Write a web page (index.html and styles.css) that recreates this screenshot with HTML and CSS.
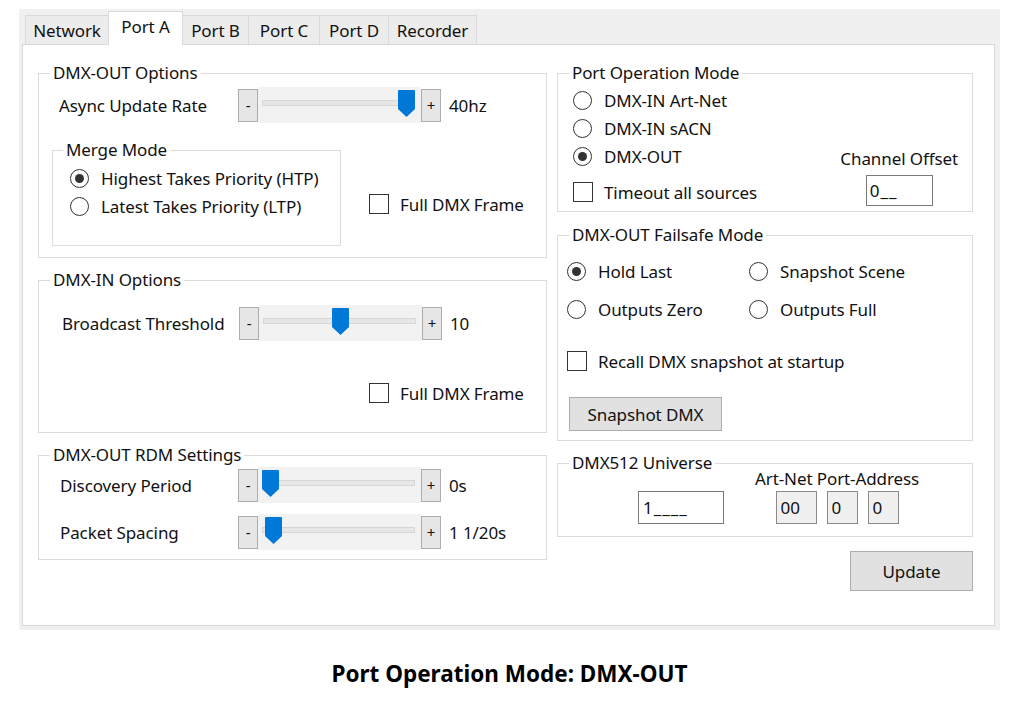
FILE: index.html
```html
<!DOCTYPE html>
<html lang="en">
<head>
<meta charset="utf-8">
<title>Port A</title>
<link rel="stylesheet" href="styles.css">
</head>
<body>
<div class="window">
  <div class="tabs">
    <div class="tab t-network">Network</div>
    <div class="tab active t-porta">Port A</div>
    <div class="tab t-portb">Port B</div>
    <div class="tab t-portc">Port C</div>
    <div class="tab t-portd">Port D</div>
    <div class="tab t-recorder">Recorder</div>
  </div>
  <div class="panel">
    <div class="col col-left">
      <section class="group g-out">
        <div class="legend">DMX-OUT Options</div>
        <div class="slider-row sr-out">
          <span class="lbl">Async Update Rate</span>
          <span class="spin">-</span>
          <span class="track"><span class="rail"></span><svg class="thumb" style="left:140px" width="17" height="27" viewBox="0 0 17 27"><path d="M1 0H16a1 1 0 0 1 1 1V19L8.5 27L0 19V1a1 1 0 0 1 1-1Z" fill="#0078d7"/></svg></span>
          <span class="spin">+</span>
          <span class="val">40hz</span>
        </div>
        <div class="out-row">
          <section class="group g-merge">
            <div class="legend">Merge Mode</div>
            <div class="radio-list merge-list">
              <div class="radio"><span class="dot on"></span>Highest Takes Priority (HTP)</div>
              <div class="radio"><span class="dot"></span>Latest Takes Priority (LTP)</div>
            </div>
          </section>
          <div class="check cb-out"><span class="box"></span>Full DMX Frame</div>
        </div>
      </section>

      <section class="group g-in">
        <div class="legend">DMX-IN Options</div>
        <div class="slider-row sr-in">
          <span class="lbl">Broadcast Threshold</span>
          <span class="spin">-</span>
          <span class="track"><span class="rail"></span><svg class="thumb" style="left:73px" width="17" height="27" viewBox="0 0 17 27"><path d="M1 0H16a1 1 0 0 1 1 1V19L8.5 27L0 19V1a1 1 0 0 1 1-1Z" fill="#0078d7"/></svg></span>
          <span class="spin">+</span>
          <span class="val">10</span>
        </div>
        <div class="check cb-in"><span class="box"></span>Full DMX Frame</div>
      </section>

      <section class="group g-rdm">
        <div class="legend">DMX-OUT RDM Settings</div>
        <div class="slider-row sr-rdm first">
          <span class="lbl">Discovery Period</span>
          <span class="spin">-</span>
          <span class="track"><span class="rail"></span><svg class="thumb" style="left:4px" width="17" height="27" viewBox="0 0 17 27"><path d="M1 0H16a1 1 0 0 1 1 1V19L8.5 27L0 19V1a1 1 0 0 1 1-1Z" fill="#0078d7"/></svg></span>
          <span class="spin">+</span>
          <span class="val">0s</span>
        </div>
        <div class="slider-row sr-rdm second">
          <span class="lbl">Packet Spacing</span>
          <span class="spin">-</span>
          <span class="track"><span class="rail"></span><svg class="thumb" style="left:7px" width="17" height="27" viewBox="0 0 17 27"><path d="M1 0H16a1 1 0 0 1 1 1V19L8.5 27L0 19V1a1 1 0 0 1 1-1Z" fill="#0078d7"/></svg></span>
          <span class="spin">+</span>
          <span class="val">1 1/20s</span>
        </div>
      </section>
    </div>

    <div class="col col-right">
      <section class="group g-port">
        <div class="legend">Port Operation Mode</div>
        <div class="port-body">
          <div class="radio-list">
            <div class="radio"><span class="dot"></span>DMX-IN Art-Net</div>
            <div class="radio"><span class="dot"></span>DMX-IN sACN</div>
            <div class="radio"><span class="dot on"></span>DMX-OUT</div>
            <div class="check cb-port"><span class="box"></span>Timeout all sources</div>
          </div>
          <div class="offset">
            <span class="cap">Channel Offset</span>
            <span class="input in-offset">0__</span>
          </div>
        </div>
      </section>

      <section class="group g-fail">
        <div class="legend">DMX-OUT Failsafe Mode</div>
        <div class="fail-grid">
          <div class="radio"><span class="dot on"></span>Hold Last</div>
          <div class="radio"><span class="dot"></span>Snapshot Scene</div>
          <div class="radio"><span class="dot"></span>Outputs Zero</div>
          <div class="radio"><span class="dot"></span>Outputs Full</div>
        </div>
        <div class="check cb-recall"><span class="box"></span>Recall DMX snapshot at startup</div>
        <div class="btn btn-snap">Snapshot DMX</div>
      </section>

      <section class="group g-uni">
        <div class="legend">DMX512 Universe</div>
        <div class="uni-body">
          <span class="input in-uni">1____</span>
          <div class="artnet">
            <span class="cap">Art-Net Port-Address</span>
            <div class="boxes">
              <span class="abox w2">00</span>
              <span class="abox w1">0</span>
              <span class="abox w1">0</span>
            </div>
          </div>
        </div>
      </section>

      <div class="btn btn-update">Update</div>
    </div>
  </div>
</div>
<p class="caption">Port Operation Mode: DMX-OUT</p>
</body>
</html>
```

FILE: styles.css
```css
* { box-sizing: border-box; }

body {
  margin: 0;
  background: #fff;
  font-family: "Noto Sans", "Open Sans", sans-serif;
  font-size: 17px;
  letter-spacing: -0.1px;
  color: #111;
}

.window {
  margin: 9px 0 0 19px;
  width: 981px;
  height: 621px;
  background: #f0f0f0;
  padding: 0 5px 4px 3px;
  display: flex;
  flex-direction: column;
}

/* tabs */
.tabs {
  height: 35px;
  flex: none;
  display: flex;
  align-items: flex-end;
  padding-left: 3px;
}
.tab {
  height: 29px;
  border: 1px solid #dadada;
  border-bottom: none;
  margin-left: -1px;
  background: #ececec;
  display: flex;
  justify-content: center;
  padding-top: 5px;
  line-height: 20px;
  white-space: nowrap;
}
.tab:first-child { margin-left: 0; }
.tab.active {
  height: 34px;
  margin-bottom: -1px;
  background: #fff;
  position: relative;
  z-index: 1;
}
.t-network { width: 84px; }
.t-porta { width: 75px; }
.t-portb { width: 67px; }
.t-portc { width: 72px; }
.t-portd { width: 70px; }
.t-recorder { width: 89px; }

/* panel */
.panel {
  flex: 1;
  background: #fff;
  border: 1px solid #d9d9d9;
  padding: 28px 0 0 15px;
  display: flex;
  gap: 10px;
  align-items: flex-start;
}
.col { display: flex; flex-direction: column; }
.col-left { width: 509px; }
.col-right { width: 416px; }

.group { border: 1px solid #dcdcdc; }
.legend {
  width: fit-content;
  height: 20px;
  margin: -11px 0 0 11px;
  padding: 0 3px;
  background: #fff;
  line-height: 20px;
  white-space: nowrap;
}

.g-out { height: 185px; }
.g-in { height: 153px; margin-top: 22px; }
.g-rdm { height: 105px; margin-top: 22px; }
.g-port { height: 139px; }
.g-fail { height: 206px; margin-top: 23px; }
.g-uni { height: 74px; margin-top: 22px; }

/* sliders */
.slider-row {
  display: flex;
  align-items: center;
  height: 36px;
}
.lbl { flex: none; white-space: nowrap; }
.sr-out { margin-top: 4px; padding-left: 20px; }
.sr-out .lbl { width: 179px; }
.sr-in { margin-top: 15px; padding-left: 23px; }
.sr-in .lbl { width: 177px; }
.sr-rdm { padding-left: 21px; }
.sr-rdm .lbl { width: 178px; }
.sr-rdm.first { margin-top: 2px; }
.sr-rdm.second { margin-top: 11px; }

.spin {
  flex: none;
  width: 20px;
  height: 33px;
  background: #e6e6e6;
  border: 1px solid #adadad;
  display: flex;
  align-items: center;
  justify-content: center;
  font-size: 15px;
  line-height: 1;
}
.track {
  flex: none;
  position: relative;
  width: 163px;
  height: 36px;
  background: #f2f2f2;
}
.rail {
  display: block;
  height: 6px;
  margin: 13px 6px 0 4px;
  background: #e7e7e7;
  border: 1px solid #d6d6d6;
}
.thumb { position: absolute; top: 3px; }
.val { margin-left: 8px; white-space: nowrap; }

/* radios & checks */
.radio-list { display: flex; flex-direction: column; }
.radio {
  display: flex;
  align-items: center;
  gap: 12px;
  height: 28px;
  white-space: nowrap;
}
.dot {
  flex: none;
  width: 19px;
  height: 19px;
  border: 1.5px solid #333;
  border-radius: 50%;
  background: #fff;
  display: flex;
  align-items: center;
  justify-content: center;
}
.dot.on::after {
  content: "";
  width: 9px;
  height: 9px;
  border-radius: 50%;
  background: #333;
}
.check {
  display: flex;
  align-items: center;
  gap: 11px;
  height: 20px;
  white-space: nowrap;
}
.box {
  flex: none;
  width: 20px;
  height: 20px;
  border: 1.5px solid #333;
  background: #fff;
}

.out-row {
  display: flex;
  align-items: flex-start;
  margin-top: 27px;
  padding-left: 13px;
}
.g-merge { width: 289px; height: 96px; flex: none; }
.g-merge .legend { margin-left: 10px; }
.merge-list { margin-top: 4px; padding-left: 17px; }
.cb-out { margin: 44px 0 0 28px; }
.cb-in { margin: 42px 0 0 330px; width: fit-content; }

/* port operation */
.port-body {
  display: flex;
  justify-content: space-between;
  align-items: flex-end;
  margin-top: 3px;
  padding: 0 14px 0 15px;
}
.cb-port { height: 28px; margin-top: 8px; }
.offset { display: flex; flex-direction: column; align-items: center; }
.cap { line-height: 22px; white-space: nowrap; }
.input {
  border: 1px solid #7a7a7a;
  background: #fff;
  padding-left: 3px;
  display: flex;
  align-items: center;
  letter-spacing: 1px;
  white-space: nowrap;
}
.in-offset { width: 67px; height: 31px; margin-top: 5px; }

/* failsafe */
.fail-grid {
  display: grid;
  grid-template-columns: 182px auto;
  grid-auto-rows: 28px;
  row-gap: 10px;
  margin-top: 12px;
  padding-left: 9px;
}
.cb-recall { height: 28px; margin: 24px 0 0 9px; }
.btn {
  background: #e1e1e1;
  border: 1px solid #adadad;
  display: flex;
  align-items: center;
  justify-content: center;
  white-space: nowrap;
}
.btn-snap { width: 153px; height: 34px; margin: 22px 0 0 11px; }

/* universe */
.uni-body {
  display: flex;
  align-items: flex-end;
  margin-top: -3px;
  padding-left: 80px;
}
.in-uni { width: 86px; height: 33px; padding-left: 4px; }
.artnet {
  margin-left: 31px;
  display: flex;
  flex-direction: column;
  align-items: center;
}
.artnet .cap { line-height: 18px; }
.boxes { display: flex; gap: 10px; margin-top: 3px; }
.abox {
  height: 33px;
  border: 1px solid #8a8a8a;
  background: #f0f0f0;
  padding-left: 4px;
  display: flex;
  align-items: center;
}
.abox.w2 { width: 41px; }
.abox.w1 { width: 31px; }

.btn-update {
  width: 123px;
  height: 40px;
  margin-top: 14px;
  align-self: flex-end;
}

.caption {
  margin: 29px 0 0 19px;
  width: 981px;
  text-align: center;
  font-weight: 700;
  font-size: 22.5px;
  letter-spacing: 0;
  line-height: 30px;
  color: #000;
}
```
